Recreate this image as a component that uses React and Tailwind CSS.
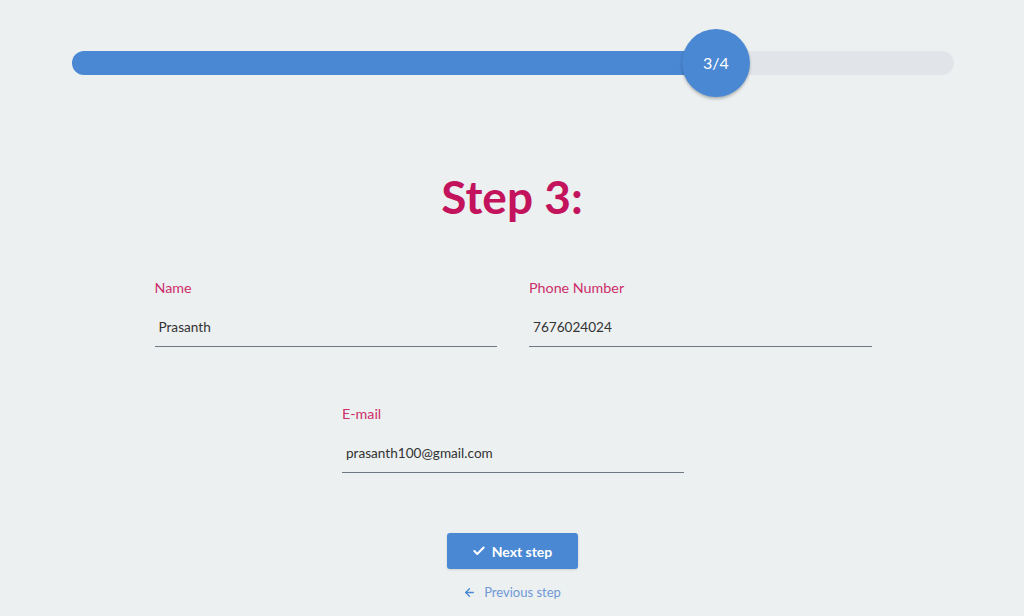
import { Check, ArrowLeft } from "lucide-react";

const fields = [
  { label: "Name", value: "Prasanth" },
  { label: "Phone Number", value: "7676024024" },
];

function Field({ label, value }) {
  return (
    <div className="flex flex-col">
      <label className="text-[14.3px] leading-5 text-[#cc2d69]">{label}</label>
      <input
        readOnly
        value={value}
        className="mt-[13px] h-9 w-full border-b border-[#6f7785] bg-transparent pb-1 pl-1 text-[13.6px] text-[#333] outline-none"
      />
    </div>
  );
}

export default function App() {
  return (
    <div className="h-[616px] w-full bg-[#ecf0f1] font-['Lato',sans-serif]">
      {/* progress */}
      <div className="pl-[72px] pr-[70px] pt-[51px]">
        <div className="relative h-6 rounded-full bg-[#e1e5ea]">
          <div className="h-6 w-[644px] rounded-full bg-[#4a88d3]" />
          <div className="absolute left-[610px] top-[-22px] flex h-[68px] w-[68px] items-center justify-center rounded-full bg-[#4a88d3] text-[16px] text-white shadow-[0_2px_3px_rgba(0,0,0,0.25)]">
            3/4
          </div>
        </div>
      </div>

      <h1 className="mt-[99px] text-center text-[46px] font-bold leading-none text-[#c2135c]">
        Step 3:
      </h1>

      <div className="mx-auto mt-[58px] w-[717px] translate-x-[1px]">
        <div className="grid grid-cols-2 gap-x-8">
          {fields.map((f) => (
            <Field key={f.label} {...f} />
          ))}
        </div>
        <div className="mx-auto mt-[57px] w-[342px]">
          <Field label="E-mail" value="prasanth100@gmail.com" />
        </div>
      </div>

      <div className="mt-[60px] flex flex-col items-center">
        <button className="flex h-9 w-[131px] items-center justify-center gap-1.5 rounded-[3px] bg-[#4a88d3] text-[14px] font-bold text-white shadow-sm">
          <Check size={14} strokeWidth={3.5} />
          Next step
        </button>
        <a className="mt-[14px] flex items-center gap-2 text-[13px] text-[#6f98d6]">
          <ArrowLeft size={13} strokeWidth={2.5} className="text-[#4a88d3]" />
          Previous step
        </a>
      </div>
    </div>
  );
}
